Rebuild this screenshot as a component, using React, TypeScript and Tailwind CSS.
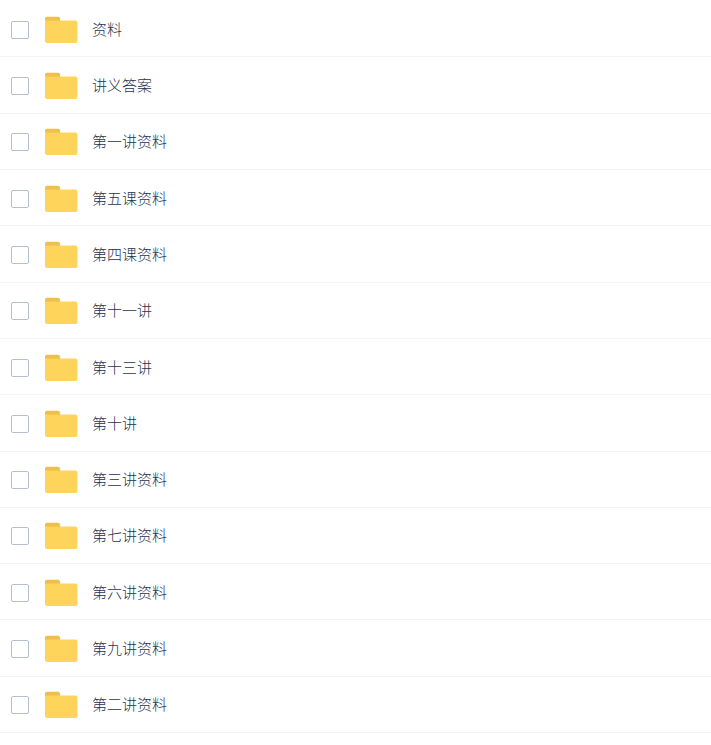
import React, { useState } from "react";

const folders = [
  "资料",
  "讲义答案",
  "第一讲资料",
  "第五课资料",
  "第四课资料",
  "第十一讲",
  "第十三讲",
  "第十讲",
  "第三讲资料",
  "第七讲资料",
  "第六讲资料",
  "第九讲资料",
  "第二讲资料",
];

const FolderIcon: React.FC = () => (
  <svg width="33" height="28" viewBox="0 0 33 28" aria-hidden="true" className="shrink-0">
    <path d="M0 8V2.5Q0 .7 2 .7h11q1.6 0 1.9 1.6L15.2 5v3z" fill="#eebf4b" />
    <path d="M0 4.5h30.5q2 0 2 2V25q0 2-2 2H2q-2 0-2-2z" fill="#ffd45a" />
  </svg>
);

const App: React.FC = () => {
  const [selected, setSelected] = useState<string[]>([]);

  const toggle = (name: string) => {
    setSelected((prev) =>
      prev.includes(name) ? prev.filter((item) => item !== name) : [...prev, name]
    );
  };

  return (
    <main className="min-h-screen flex flex-col bg-white pt-px pb-3 font-['Liberation_Sans','Noto_Sans_CJK_SC',sans-serif]">
      <ul className="flex flex-1 flex-col">
        {folders.map((name) => (
          <li key={name} className="flex flex-1 border-b border-[#f2f4fb]">
            <label className="flex flex-1 items-center pl-[11px] pt-[14px] pb-3 cursor-pointer">
              <input
                type="checkbox"
                checked={selected.includes(name)}
                onChange={() => toggle(name)}
                className="size-[18px] shrink-0 appearance-none rounded-xs border border-[#b4bfd0] bg-white checked:border-[#06a7ff] checked:bg-[#06a7ff]"
              />
              <span className="flex items-center gap-[14px] pl-4">
                <FolderIcon />
                <span className="text-[15px] leading-5 font-light text-[#27334f]">{name}</span>
              </span>
            </label>
          </li>
        ))}
      </ul>
    </main>
  );
};

export default App;
